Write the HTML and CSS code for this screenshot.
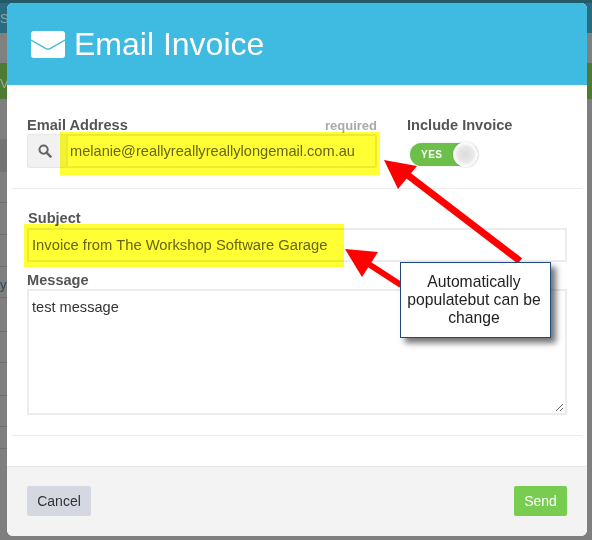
FILE: index.html
```html
<!DOCTYPE html>
<html lang="en">
<head>
<meta charset="utf-8">
<title>Email Invoice</title>
<link rel="stylesheet" href="styles.css">
</head>
<body>
<div class="backdrop">
  <div class="bg-band bg-teal"><span class="bg-text">S</span></div>
  <div class="bg-band bg-gray"></div>
  <div class="bg-band bg-green"><span class="bg-text bg-text-green">V</span></div>
  <div class="bg-rows">
    <div class="bg-cell"></div>
    <div class="bg-cell bg-cell-dark"></div>
    <div class="bg-cell"></div>
    <div class="bg-cell"></div>
    <div class="bg-cell"></div>
    <div class="bg-cell bg-cell-text"><span>y</span></div>
    <div class="bg-cell"></div>
    <div class="bg-cell"></div>
    <div class="bg-cell"></div>
    <div class="bg-cell"></div>
    <div class="bg-cell"></div>
  </div>
</div>
<main class="modal">
  <header class="modal-head">
    <svg class="mail-icon" viewBox="0 0 34 27" aria-hidden="true"><rect width="34" height="27" rx="3" fill="#fff"/><path d="M0 9L15 17.6Q17 18.6 19 17.6L34 9" fill="none" stroke="#3fbae1" stroke-width="1.3"/></svg>
    <h1 class="modal-title">Email Invoice</h1>
  </header>
  <section class="modal-body">
    <div class="top-row">
      <div class="email-col">
        <div class="label-row"><label class="label">Email Address</label><span class="required">required</span></div>
        <div class="input-group">
          <span class="addon"><svg class="search-icon" viewBox="0 0 14 14" aria-hidden="true"><circle cx="5.6" cy="5.6" r="4.1" fill="none" stroke="#666" stroke-width="2"/><path d="M8.6 8.6l4 4" stroke="#666" stroke-width="2.4" stroke-linecap="round"/></svg></span>
          <div class="field email-field">melanie@reallyreallyreallylongemail.com.au</div>
        </div>
      </div>
      <div class="invoice-col">
        <label class="label">Include Invoice</label>
        <div class="switch"><span class="switch-text">YES</span><span class="knob"></span></div>
      </div>
    </div>
    <hr class="rule rule-first">
    <div class="subject-block">
      <label class="label label-subject">Subject</label>
      <div class="field subject-field">Invoice from The Workshop Software Garage</div>
    </div>
    <div class="message-block">
      <label class="label">Message</label>
      <div class="textarea">test message
        <svg class="grip" viewBox="0 0 9 9" aria-hidden="true"><path d="M1 8l7-7M5 8l3-3" stroke="#666" stroke-width="1"/></svg>
      </div>
    </div>
    <hr class="rule rule-second">
  </section>
  <footer class="modal-foot">
    <button class="btn btn-cancel">Cancel</button>
    <button class="btn btn-send">Send</button>
  </footer>
</main>
<div class="hl hl-email"></div>
<div class="hl hl-subject"></div>
<svg class="arrows" viewBox="0 0 592 540" aria-hidden="true">
  <path d="M520 261L405 173" stroke="#f00" stroke-width="7" fill="none"/>
  <polygon fill="#f00" points="384,160 417,166 398,189"/>
  <path d="M401 285L367 263" stroke="#f00" stroke-width="6" fill="none"/>
  <polygon fill="#f00" points="345,249 378,252 362,277"/>
</svg>
<aside class="callout">Automatically populatebut can be change</aside>
</body>
</html>
```
FILE: styles.css
```css
* { box-sizing: border-box; }
html, body { margin: 0; padding: 0; }
body {
  width: 592px;
  height: 540px;
  overflow: hidden;
  position: relative;
  background: #7f7f7f;
  font-family: "Liberation Sans", Arial, sans-serif;
}
.backdrop { position: absolute; inset: 0; display: flex; flex-direction: column; }
.bg-band { flex: none; overflow: hidden; }
.bg-teal { height: 33px; background: #2a6b80; border-top: 3px solid #235a68; }
.bg-gray { height: 30px; background: #808080; }
.bg-green { height: 36px; background: #4e7a33; }
.bg-text { display: block; font-size: 13px; line-height: 15px; color: #8aa; margin: 8px 0 0 0; }
.bg-text-green { color: #9a9; margin-top: 13px; }
.bg-rows {
  width: 7px;
  display: grid;
  grid-template-rows: 40px 33px 31px 32px 32px 31px 34px 31px 33px 31px 22px;
}
.bg-cell { border-bottom: 1px solid #6f6f6f; }
.bg-cell:first-child { border-bottom: 0; }
.bg-cell-dark { background: #747474; border-bottom: 0; }
.bg-cell-text { position: relative; }
.bg-cell-text span { position: absolute; left: 0; top: 10px; font-size: 13px; line-height: 15px; color: #2a4a55; }

.modal {
  position: absolute;
  left: 7px;
  top: 3px;
  width: 580px;
  height: 533px;
  background: #fff;
  border-radius: 6px;
  overflow: hidden;
  display: flex;
  flex-direction: column;
}
.modal-head {
  height: 82px;
  flex: none;
  background: #3fbae1;
  display: flex;
  align-items: center;
  padding: 0 0 0 24px;
  gap: 9px;
}
.mail-icon { width: 34px; height: 27px; flex: none; }
.modal-title { margin: 0; font-size: 32px; font-weight: 400; color: #fff; line-height: 36px; }
.modal-body { flex: 1; position: relative; padding: 32px 20px 0; }
.top-row { display: flex; gap: 30px; }
.email-col { width: 350px; }
.label-row { display: flex; justify-content: space-between; align-items: baseline; height: 17px; }
.label { display: block; font-size: 14.6px; font-weight: 700; color: #555; line-height: 17px; }
.label-subject { padding-left: 1px; }
.required { font-size: 13px; font-weight: 700; color: #aaa; }
.input-group { display: flex; height: 34px; }
.addon {
  width: 39px;
  flex: none;
  display: flex;
  align-items: center;
  justify-content: center;
  background: #f1f1f1;
  border: 1px solid #e6e6e6;
  border-right: 0;
  border-radius: 3px 0 0 3px;
  padding-right: 5px;
}
.search-icon { width: 14px; height: 14px; }
.field {
  font-size: 14.6px;
  color: #666;
  background: #fff;
  border: 2px solid #ebebf0;
  display: flex;
  align-items: center;
}
.email-field { flex: 1; padding-left: 2px; border-radius: 0 3px 3px 0; }
.switch {
  width: 68px;
  height: 23px;
  margin: 9px 0 0 3px;
  border-radius: 12px;
  background: #6cc04a;
  position: relative;
  display: flex;
  align-items: center;
  padding-left: 11px;
  box-shadow: 0 0 2px rgba(0,0,0,.15);
}
.switch-text { font-size: 10px; font-weight: 700; letter-spacing: 0.5px; color: #fff; }
.knob {
  position: absolute;
  right: 0;
  top: -1px;
  width: 25px;
  height: 25px;
  border-radius: 50%;
  background: radial-gradient(circle, #dcdcdc 0, #e8e8e8 45%, #fbfbfb 62%, #fff 100%);
  box-shadow: 0 0 2px rgba(0,0,0,.2);
}
.rule { border: 0; height: 1px; background: #ececef; margin: 0; }
.rule-first { margin: 20px -15px 0; }
.subject-block { margin: 21px 0 0; }
.subject-field { height: 34px; margin-top: 1px; padding-left: 3px; font-size: 14.75px; }
.message-block { margin: 10px 0 0; }
.textarea {
  position: relative;
  height: 126px;
  border: 2px solid #ebebf0;
  font-size: 14.6px;
  color: #333;
  padding: 8px 3px;
}
.grip { position: absolute; right: 1px; bottom: 1px; width: 9px; height: 9px; }
.rule-second { margin: 20px -15px 0; }
.modal-foot {
  height: 70px;
  flex: none;
  background: #f3f3f3;
  border-top: 1px solid #e6e6e6;
  display: flex;
  justify-content: space-between;
  align-items: flex-start;
  padding: 19px 20px 0;
}
.btn { border: 0; border-radius: 2px; height: 30px; font: 14px "Liberation Sans", Arial, sans-serif; padding: 0; }
.btn-cancel { width: 64px; background: #d5d8e1; color: #333; }
.btn-send { width: 53px; background: #78cc50; color: #fff; }

.hl { position: absolute; background: #ffff33; mix-blend-mode: multiply; }
.hl-email { left: 60px; top: 132px; width: 320px; height: 43px; }
.hl-subject { left: 24px; top: 224px; width: 320px; height: 43px; }
.arrows { position: absolute; left: 0; top: 0; width: 592px; height: 540px; }
.callout {
  position: absolute;
  left: 400px;
  top: 262px;
  width: 151px;
  height: 76px;
  background: #fff;
  border: 1px solid #1f497d;
  box-shadow: 5px 5px 6px rgba(0,0,0,.55);
  font-size: 15.7px;
  line-height: 18px;
  color: #222;
  text-align: center;
  padding: 10px 6px 0 3px;
}
```
